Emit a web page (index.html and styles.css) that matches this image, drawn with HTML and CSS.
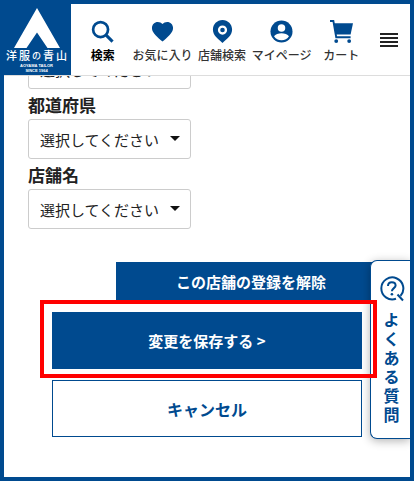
FILE: index.html
```html
<!DOCTYPE html>
<html lang="ja">
<head>
  <meta charset="UTF-8" />
  <meta name="viewport" content="width=device-width, initial-scale=1.0"/>
  <title>店舗登録 | 洋服の青山</title>
  <link rel="stylesheet" href="styles.css">
</head>
<body>

<div class="page">
  <header class="header">
    <a href="#" class="logo">
      <svg class="logo-mark" viewBox="0 0 46 40" aria-hidden="true">
        <path d="M23 0L46 40H33.500L23 24.500L12.500 40H0Z" fill="#fff"/>
      </svg>
      <span class="logo-name"><span>洋</span><span>服</span><small>の</small><span>青</span><span>山</span></span>
      <span class="logo-sub"><span>AOYAMA TAILOR</span><span>SINCE 1964</span></span>
    </a>

    <nav class="nav">
      <a href="#" class="nav-item active">
        <svg viewBox="0 0 24 24" aria-hidden="true">
          <circle cx="10" cy="10" r="7.800" fill="none" stroke="currentColor" stroke-width="2.800"/>
          <path d="M15.500 15.500L22.500 22.500" stroke="currentColor" stroke-width="3.200"/>
        </svg>
        <span>検索</span>
      </a>
      <a href="#" class="nav-item">
        <svg viewBox="0 0 24 24" aria-hidden="true">
          <path d="M12 22.500L10.300 21C4.500 15.800 1 12.500 1 8.300C1 4.700 3.700 2 7.100 2C9 2 10.800 2.900 12 4.300C13.200 2.900 15 2 16.900 2C20.300 2 23 4.700 23 8.300C23 12.500 19.500 15.800 13.700 21Z" fill="currentColor"/>
        </svg>
        <span>お気に入り</span>
      </a>
      <a href="#" class="nav-item">
        <svg viewBox="0 0 24 24" aria-hidden="true">
          <path d="M12 0C6.300 0 2 4.500 2 10C2 16 7 19.500 12 24C17 19.500 22 16 22 10C22 4.500 17.700 0 12 0Z" fill="currentColor"/>
          <circle cx="12" cy="10.500" r="3.600" fill="none" stroke="#fff" stroke-width="2.400"/>
        </svg>
        <span>店舗検索</span>
      </a>
      <a href="#" class="nav-item">
        <svg viewBox="0 0 24 24" aria-hidden="true">
          <circle cx="12" cy="12" r="11.500" fill="currentColor"/>
          <circle cx="12" cy="8.300" r="3.900" fill="#fff"/>
          <path d="M4.200 17C5.500 14.700 9 13.700 12 13.700S18.500 14.700 19.800 17C18.200 19.600 15.300 21.200 12 21.200S5.800 19.600 4.200 17Z" fill="#fff"/>
        </svg>
        <span>マイページ</span>
      </a>
      <a href="#" class="nav-item">
        <svg viewBox="0 0 24 24" aria-hidden="true">
          <path d="M0 1H3.500L6.500 18H21.500" fill="none" stroke="currentColor" stroke-width="2"/>
          <path d="M4 3.500H24L21.500 15H6Z" fill="currentColor"/>
          <circle cx="6.500" cy="22" r="2" fill="currentColor"/>
          <circle cx="20" cy="22" r="2" fill="currentColor"/>
        </svg>
        <span>カート</span>
      </a>
    </nav>

    <button type="button" class="menu-btn" aria-label="メニュー">
      <span></span><span></span><span></span><span></span>
    </button>
  </header>

  <main class="main">
    <form class="form">
      <div class="select-wrap">
        <select class="select" aria-label="地域"><option>選択してください</option></select>
      </div>

      <label class="label" for="pref">都道府県</label>
      <div class="select-wrap">
        <select class="select" id="pref"><option>選択してください</option></select>
      </div>

      <label class="label" for="shop">店舗名</label>
      <div class="select-wrap">
        <select class="select" id="shop"><option>選択してください</option></select>
      </div>

      <button type="button" class="btn remove-btn">この店舗の登録を解除</button>

      <div class="actions">
        <div class="highlight">
          <button type="submit" class="btn save-btn">変更を保存する &gt;</button>
        </div>
        <button type="button" class="btn cancel-btn">キャンセル</button>
      </div>
    </form>
  </main>

  <a href="#" class="faq-tab">
    <svg viewBox="0 0 26 26" aria-hidden="true">
      <path d="M17 22.800A11 11 0 1 1 21.500 19.800" fill="none" stroke="currentColor" stroke-width="2"/>
      <path d="M18.500 18.500L24 24.500" stroke="currentColor" stroke-width="2"/>
      <path d="M9 10C9 7.500 10.700 6.200 12.800 6.200C15 6.200 16.600 7.500 16.600 9.500C16.600 12 12.900 12.300 12.900 15.200" fill="none" stroke="currentColor" stroke-width="2"/>
      <circle cx="12.900" cy="18.200" r="1.300" fill="currentColor"/>
    </svg>
    <span>よくある質問</span>
  </a>
</div>

</body>
</html>
```

FILE: styles.css
```css
* {
  box-sizing: border-box;
}

body {
  margin: 0;
  font-family: "Noto Sans CJK JP", sans-serif;
  color: #222;
  background: #fff;
}

.page {
  position: relative;
  min-height: 100vh;
  border: 4px solid #004a8f;
  overflow: hidden;
}

/* Header */
.header {
  position: absolute; /* Stays over the scrolled form */
  top: 0;
  left: 0;
  right: 0;
  z-index: 2;
  display: flex;
  height: 72px;
  background: #fff;
  border-bottom: 1px solid #ddd;
}

.logo {
  flex: none;
  display: flex;
  flex-direction: column;
  align-items: center;
  width: 67px;
  padding: 4px 2px 0 0;
  background: #004a8f;
  color: #fff;
  text-decoration: none;
}

.logo-mark {
  width: 46px;
  height: 40px;
}

.logo-name {
  display: flex;
  align-items: center;
  gap: 2px;
  font-size: 11px;
  font-weight: 500;
  line-height: 15px;
}

.logo-name small {
  font-size: 9px;
}

.logo-sub {
  display: flex;
  flex-direction: column;
  align-items: center;
  font-family: "Liberation Sans", sans-serif;
  font-size: 4px;
  font-weight: 700;
  line-height: 5px;
}

.nav {
  flex: 1;
  display: grid;
  grid-template-columns: repeat(5, 1fr);
  padding-left: 2px;
}

.nav-item {
  display: flex;
  flex-direction: column;
  align-items: center;
  gap: 4px;
  padding-top: 16px;
  color: #333;
  font-size: 12px;
  font-weight: 500;
  line-height: 16px;
  text-decoration: none;
  white-space: nowrap;
}

.nav-item svg {
  width: 23px;
  height: 23px;
  color: #004a8f;
}

.nav-item.active {
  color: #000;
  font-weight: 700;
}

.menu-btn {
  flex: none;
  display: flex;
  flex-direction: column;
  justify-content: center;
  gap: 2px;
  width: 39px;
  padding: 0 12px 0 9px;
  background: none;
  border: none;
  cursor: pointer;
}

.menu-btn span {
  height: 2px;
  background: #222;
}

/* Form */
.main {
  padding: 45px 24px 40px;
}

.form {
  display: flex;
  flex-direction: column;
}

.label {
  padding: 3px 0 2px;
  font-size: 17px;
  font-weight: 700;
  line-height: 25px;
}

.select-wrap {
  position: relative;
  align-self: flex-start;
}

.select-wrap::after {
  content: "";
  position: absolute;
  top: 17px;
  right: 11px;
  border: 5px solid transparent;
  border-top-color: #111;
  border-bottom: none;
  pointer-events: none;
}

.select {
  display: block;
  width: 163px;
  height: 40px;
  padding: 0 11px;
  appearance: none;
  background: #fff;
  border: 1px solid #ccc;
  border-radius: 3px;
  color: #222;
  font-family: inherit;
  font-size: 15px;
}

.btn {
  border: 1px solid #004a8f;
  background: #004a8f;
  color: #fff;
  font-family: inherit;
  font-size: 15px;
  font-weight: 700;
  cursor: pointer;
}

.remove-btn {
  height: 40px;
  margin: 33px 0 0 88px;
  padding-bottom: 3px;
}

.actions {
  display: flex;
  flex-direction: column;
  gap: 11px;
  padding: 10px 24px 0;
}

/* Red frame around the save button */
.highlight {
  position: relative;
  z-index: 3;
  display: grid;
}

.highlight::after {
  content: "";
  position: absolute;
  inset: -12px -15px -9px -12px;
  border: 4px solid #f00;
  pointer-events: none;
}

.save-btn,
.cancel-btn {
  height: 57px;
}

.cancel-btn {
  background: #fff;
  color: #004a8f;
  font-size: 16px;
}

/* FAQ tab */
.faq-tab {
  position: absolute;
  top: 256px;
  right: 0;
  z-index: 1;
  display: flex;
  flex-direction: column;
  align-items: center;
  gap: 8px;
  width: 40px;
  padding: 15px 0 14px 2px;
  background: #fff;
  border: 1px solid #004a8f;
  border-right: none;
  border-radius: 7px 0 0 7px;
  box-shadow: 0 2px 10px rgba(0,0,0,0.3);
  color: #004a8f;
  font-size: 16px;
  font-weight: 700;
  line-height: 19px;
  text-decoration: none;
}

.faq-tab svg {
  width: 26px;
  height: 26px;
}

.faq-tab span {
  width: 16px; /* One character per line */
}
```
